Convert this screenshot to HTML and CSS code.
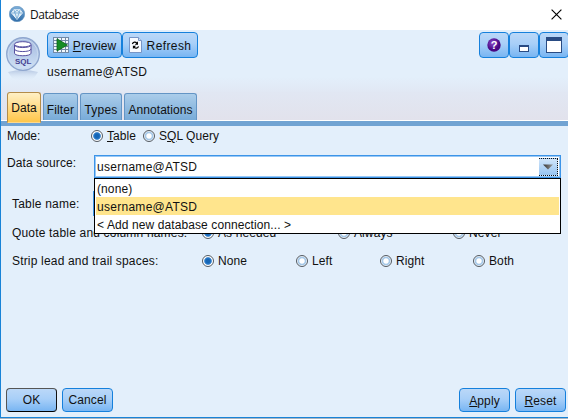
FILE: index.html
```html
<!DOCTYPE html>
<html lang="en">
<head>
<meta charset="utf-8">
<title>Database</title>
<link rel="stylesheet" href="styles.css">
</head>
<body>
<div class="window">
  <header class="titlebar">
    <svg class="app-icon" width="16" height="16" viewBox="0 0 16 16">
      <defs><linearGradient id="ag" x1="0" y1="0" x2="0" y2="1"><stop offset="0" stop-color="#7fb0da"/><stop offset="1" stop-color="#2f6ca8"/></linearGradient></defs>
      <circle cx="8" cy="8" r="7.7" fill="url(#ag)" stroke="#5f91bd" stroke-width=".6"/>
      <path d="M4.8 3.8h6.4L13.4 7 8 13.4 2.6 7z" fill="#d9ebf7" stroke="#fff" stroke-width=".8"/>
      <path d="M3 7h10M5 4l3 9 3-9M5.4 6.8 8 4l2.6 2.8" fill="none" stroke="#69a0cd" stroke-width=".7"/>
    </svg>
    <span class="title">Database</span>
    <svg class="close" width="11" height="11" viewBox="0 0 11 11"><path d="M.6.6l9.8 9.8M10.4.6L.6 10.4" stroke="#000" stroke-width="1.15"/></svg>
  </header>

  <section class="header">
    <svg class="sql-icon" width="36" height="48" viewBox="0 0 36 48">
      <defs>
        <linearGradient id="sg" x1="0" y1="0" x2="0" y2="1"><stop offset="0" stop-color="#a2b5dc"/><stop offset=".5" stop-color="#b9cdea"/><stop offset="1" stop-color="#d3e4f7"/></linearGradient>
        <linearGradient id="rg" x1="0" y1="0" x2="0" y2="1"><stop offset="0" stop-color="#b5c7e2"/><stop offset="1" stop-color="#e3effb" stop-opacity="0"/></linearGradient>
      </defs>
      <path d="M3 36q15-4 30 0l-4 6q-11 6-22 0z" fill="url(#rg)"/>
      <circle cx="18" cy="18" r="16.3" fill="url(#sg)" stroke="#8ea6ce" stroke-width="1.3"/>
      <circle cx="18" cy="18" r="14.8" fill="none" stroke="#c9dbf0" stroke-width="1"/>
      <g fill="#fff" stroke="#5750a0" stroke-width="1">
        <path d="M9.5 9v8.2c0 3.4 16.5 3.4 16.5 0V9"/>
        <path d="M9.5 13c0 3.4 16.5 3.4 16.5 0M9.5 9c0 3.4 16.5 3.4 16.5 0" fill="none"/>
        <ellipse cx="17.75" cy="8.3" rx="8.25" ry="2.6"/>
      </g>
      <text x="10" y="28" textLength="16.5" lengthAdjust="spacingAndGlyphs" class="sql-text">SQL</text>
    </svg>
    <div class="head-main">
      <div class="toolbar">
        <button class="btn preview">
          <svg width="16" height="16" viewBox="0 0 16 16"><path d="M0 0h16v16H0z" fill="#7289a6"/><path d="M1 1h3v2H1zM5 1h3v2H5zM9 1h3v2H9zM13 1h2v2h-2zM1 4h3v2H1zM9 4h3v2H9zM13 4h2v2h-2zM1 7h3v2H1zM13 7h2v2h-2zM1 10h3v2H1zM9 10h3v2H9zM13 10h2v2h-2zM1 13h3v2H1zM5 13h3v2H5zM9 13h3v2H9zM13 13h2v2h-2z" fill="#f2f7fc"/><path d="M4 1.8 14.5 8 4 14z" fill="#168d25" stroke="#0b6418" stroke-width=".8"/></svg>
          <span><u>P</u>review</span>
        </button>
        <button class="btn refresh">
          <svg width="13" height="16" viewBox="0 0 13 16"><path d="M.5.5h9l3 3v12H.5z" fill="#f7faff" stroke="#7795c7"/><path d="M9.5.5v3h3" fill="#cbdaf0" stroke="#7795c7"/><path d="M3.4 7c.6-2.2 3.2-2.5 4.4-.8M9.5 9.3c-.6 2.2-3.2 2.5-4.4.8" fill="none" stroke="#000" stroke-width="1.2"/><path d="M9 4.2v3.5H5.8zM3.9 12.1V8.7h3.2z"/></svg>
          <span>Refresh</span>
        </button>
      </div>
      <div class="current">username@ATSD</div>
    </div>
    <div class="win-tools">
      <button class="btn tool">
        <svg width="14" height="14" viewBox="0 0 14 14"><defs><radialGradient id="hg" cx=".4" cy=".35"><stop offset="0" stop-color="#8b4bc9"/><stop offset="1" stop-color="#480783"/></radialGradient></defs><circle cx="7" cy="7" r="6.7" fill="url(#hg)"/><text x="7" y="11" text-anchor="middle" class="help-text">?</text></svg>
      </button>
      <button class="btn tool mini"><i class="win-min"></i></button>
      <button class="btn tool"><i class="win-max"></i></button>
    </div>
  </section>

  <nav class="tabs">
    <div class="tab active">Data</div>
    <div class="tab filter">Filter</div>
    <div class="tab types">Types</div>
    <div class="tab annotations">Annotations</div>
  </nav>

  <main class="form">
    <div class="row mode">
      <span class="label">Mode:</span>
      <label class="radio on"><i></i><span><u>T</u>able</span></label>
      <label class="radio"><i></i><span>S<u>Q</u>L Query</span></label>
    </div>
    <div class="row source">
      <span class="label">Data source:</span>
      <div class="combo">
        <span class="value">username@ATSD</span>
        <div class="arrow"><svg width="10" height="6" viewBox="0 0 10 6"><defs><linearGradient id="dg"><stop offset="0" stop-color="#333"/><stop offset="1" stop-color="#999"/></linearGradient></defs><path d="M0 .5h10L5 5.5z" fill="url(#dg)"/></svg></div>
        <div class="menu">
          <div class="item none">(none)</div>
          <div class="item selected">username@ATSD</div>
          <div class="item add">&lt; Add new database connection... &gt;</div>
        </div>
      </div>
    </div>
    <div class="row table-name">
      <span class="label">Table name:</span>
      <div class="field"></div>
    </div>
    <div class="row quote">
      <span class="label">Quote table and column names:</span>
      <label class="radio on"><i></i><span>As needed</span></label>
      <label class="radio"><i></i><span>Always</span></label>
      <label class="radio"><i></i><span>Never</span></label>
    </div>
    <div class="row strip">
      <span class="label">Strip lead and trail spaces:</span>
      <label class="radio on"><i></i><span>None</span></label>
      <label class="radio"><i></i><span>Left</span></label>
      <label class="radio"><i></i><span>Right</span></label>
      <label class="radio"><i></i><span>Both</span></label>
    </div>
  </main>

  <footer class="actions">
    <button class="btn action ok">OK</button>
    <button class="btn action">Cancel</button>
    <button class="btn action apply"><span><u>A</u>pply</span></button>
    <button class="btn action"><span><u>R</u>eset</span></button>
  </footer>
</div>
</body>
</html>
```
FILE: styles.css
```css
* { box-sizing: border-box; }
body {
  margin: 0;
  height: 419px;
  overflow: hidden;
  background: #a9b4c0;
  font: 12px/16px "Liberation Sans", Arial, sans-serif;
  letter-spacing: .1px;
  color: #111;
}
.window {
  display: flex;
  flex-direction: column;
  width: 568px;
  height: 418px;
  border-left: 1px solid #1883d7;
  border-bottom: 1px solid #1883d7;
  background: #e3effb;
}
.titlebar {
  display: flex;
  align-items: center;
  flex: 0 0 30px;
  padding: 0 6px 2px 8px;
  background: #fff;
}
.title {
  margin: 2px 0 0 5px;
  font: 12px/16px "Open Sans", "Noto Sans", sans-serif;
  letter-spacing: -.5px;
}
.titlebar .close { margin-left: auto; }
.header {
  display: flex;
  flex: 0 0 62px;
  padding: 2px 0 0 4px;
  background: linear-gradient(#e3effb 75%, #e1e8f4);
}
.sql-icon { margin-top: 4px; }
.sql-text { font: bold 7.5px "Liberation Sans", sans-serif; letter-spacing: 0; fill: #453f91; }
.head-main { margin-left: 6px; }
.toolbar { display: flex; }
.btn {
  display: flex;
  align-items: center;
  justify-content: center;
  height: 26px;
  padding: 0;
  border: 1px solid #1580dc;
  border-radius: 4px;
  background: linear-gradient(#bbd8f8, #a8cff8 45%, #78b5f2);
  font: inherit;
  letter-spacing: inherit;
  color: #111;
}
.btn span { padding-top: 1px; }
u { text-underline-offset: 1px; text-decoration-thickness: 1px; }
.preview { width: 75px; gap: 4px; letter-spacing: .1px; }
.refresh { width: 76px; gap: 5px; letter-spacing: .4px; }
.current { margin-top: 6px; letter-spacing: .28px; }
.value, .selected { letter-spacing: .28px; }
.win-tools { display: flex; margin-left: auto; margin-right: -1px; }
.tool { width: 30px; }
.help-text { font: bold 11px "Liberation Sans", sans-serif; fill: #fff; letter-spacing: 0; }
.win-min { width: 10px; height: 7px; border: 1px solid #294b83; border-top-width: 2px; background: #fff; }
.mini { padding-top: 7px; }
.win-max { width: 16px; height: 16px; border: 1px solid #294b83; border-top-width: 4px; background: #fff; }
.tabs {
  display: flex;
  align-items: flex-start;
  gap: 2px;
  flex: 0 0 34px;
  padding-left: 6px;
  background: linear-gradient(#e1e7f3 0, #e2e2ec 28px, #fff 28px, #fff 29px, #71a3d2 29px);
}
.tab {
  height: 27px;
  margin-top: 1px;
  border: 1px solid #6495c5;
  border-bottom: 0;
  border-radius: 3px 3px 0 0;
  background: linear-gradient(#abcdea, #78abd8);
  line-height: 32px;
  text-align: center;
}
.tab.active {
  width: 34px;
  height: 31px;
  margin-top: 0;
  border-color: #b38c4a;
  border-bottom: 1px solid #ffd98a;
  background: linear-gradient(#fff0c5, #ffc64a);
  line-height: 31px;
}
.filter { width: 35px; }
.types { width: 42px; letter-spacing: .2px; }
.annotations { width: 73px; letter-spacing: .05px; }
.form { flex: 1; }
.row { display: flex; align-items: center; padding-left: 11px; }
.label { flex: none; }
.radio { display: flex; align-items: center; gap: 4px; white-space: nowrap; }
.radio i {
  width: 12px;
  height: 12px;
  border: 1px solid #555b62;
  border-radius: 50%;
  background: radial-gradient(circle, #fff 0 2.2px, #a5c8e8 3.2px 4px, #e8f1fa 4.6px);
}
.radio.on i { background: radial-gradient(circle, #1565b5 0 1.8px, #2c7dcc 3.3px, #fff 4.3px); }
.mode { height: 20px; padding-left: 6px; }
.mode .label { width: 84px; letter-spacing: 0; }
.mode .radio { letter-spacing: .05px; }
.mode .radio.on { width: 52px; }
.source { height: 33px; padding-left: 6px; align-items: flex-start; padding-top: 9px; }
.source .label { width: 87px; }
.combo {
  position: relative;
  display: flex;
  align-items: center;
  width: 467px;
  height: 23px;
  padding: 0 2px;
  border: 1px solid #3c94e8;
  box-shadow: inset 0 0 0 1px #99c8f5;
  background: #fff;
}
.arrow {
  display: flex;
  align-items: center;
  justify-content: center;
  width: 19px;
  height: 18px;
  margin-left: auto;
  border: 1px dotted #111;
  border-left: 0;
  background: linear-gradient(#d0e5fa, #97c4f1);
}
.menu {
  position: absolute;
  top: 22px;
  left: -1px;
  z-index: 1;
  width: 467px;
  padding: 1px 1px 0;
  border: 1px solid #000;
  background: #fff;
}
.item { height: 18px; padding-left: 1px; line-height: 20px; }
.item.none { height: 17px; line-height: 19px; }
.selected { background: #ffe58d; }
.table-name { height: 25px; margin-top: 12px; }
.table-name .label { width: 81px; letter-spacing: .2px; }
.field { width: 466px; height: 25px; border: 1px solid #3c94e8; background: #fff; }
.quote { height: 20px; margin-top: 7px; }
.quote .label, .strip .label { width: 190px; letter-spacing: .18px; }
.quote .radio:nth-child(2) { width: 136px; }
.quote .radio:nth-child(3) { width: 115px; }
.strip { height: 20px; margin-top: 8px; }
.strip .radio:nth-child(2) { width: 94px; }
.strip .radio:nth-child(3) { width: 84px; }
.strip .radio:nth-child(4) { width: 93px; }
.actions { display: flex; gap: 5px; padding: 0 2px 5px 5px; }
.action { width: 51px; height: 24px; }
.ok { border-color: #555 #111 #000 #555; }
.apply { margin-left: auto; }
```
